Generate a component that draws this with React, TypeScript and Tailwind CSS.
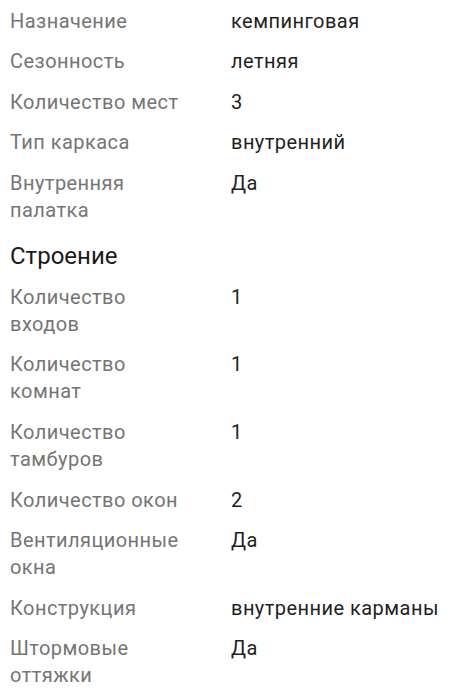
type Spec = { label: string; value: string };

const general: Spec[] = [
  { label: "Назначение", value: "кемпинговая" },
  { label: "Сезонность", value: "летняя" },
  { label: "Количество мест", value: "3" },
  { label: "Тип каркаса", value: "внутренний" },
  { label: "Внутренняя палатка", value: "Да" },
];

const structure: Spec[] = [
  { label: "Количество входов", value: "1" },
  { label: "Количество комнат", value: "1" },
  { label: "Количество тамбуров", value: "1" },
  { label: "Количество окон", value: "2" },
  { label: "Вентиляционные окна", value: "Да" },
  { label: "Конструкция", value: "внутренние карманы" },
  { label: "Штормовые оттяжки", value: "Да" },
];

function SpecList({ items }: { items: Spec[] }) {
  return (
    <dl className="flex flex-col gap-[13.6px]">
      {items.map((s) => (
        <div key={s.label} className="flex">
          <dt className="w-[221px] shrink-0 pr-[36px] text-[#757575]">{s.label}</dt>
          <dd className="text-[#1f1f1f]">{s.value}</dd>
        </div>
      ))}
    </dl>
  );
}

export default function App() {
  return (
    <div
      className="min-h-screen bg-white pl-[10px] pr-2 pt-[7.5px] text-[20px] leading-[27px] tracking-[0.45px]"
      style={{ fontFamily: "Roboto, 'Liberation Sans', sans-serif" }}
    >
      <SpecList items={general} />
      <h2 className="mt-[16.5px] mb-[11.5px] text-[24px] leading-[32px] tracking-normal text-[#1a1a1a]">
        Строение
      </h2>
      <SpecList items={structure} />
    </div>
  );
}
